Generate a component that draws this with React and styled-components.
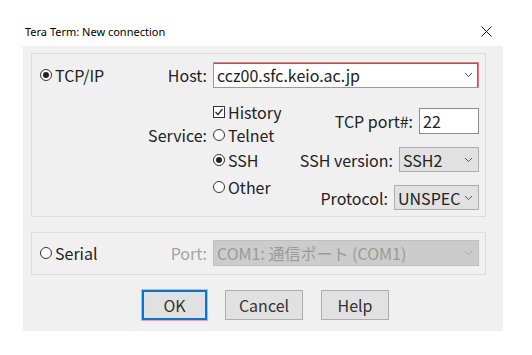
import React from "react";
import styled, { createGlobalStyle } from "styled-components";

const GlobalStyle = createGlobalStyle`
  html, body { margin: 0; padding: 0; background: #ffffff; }
  body { font-family: "Noto Sans CJK JP", "Noto Sans", sans-serif; }
  * { box-sizing: border-box; }
`;

const Page = styled.div`
  width: 532px;
  height: 355px;
  background: #fff;
  color: #222;
`;

const TitleBar = styled.div`
  height: 46px;
  padding: 16px 40px 0 25px;
  display: flex;
  align-items: center;
  justify-content: space-between;
`;

const Title = styled.span`
  font-family: "Noto Sans", "Liberation Sans", sans-serif;
  font-size: 11px;
  color: #000;
`;

const CloseIcon = styled.svg`
  width: 11px;
  height: 11px;
  display: block;
`;

const Dialog = styled.div`
  margin-left: 23px;
  width: 480px;
  height: 285px;
  background: #f0f0f0;
  padding: 7px 17px 0 8px;
  display: flex;
  flex-direction: column;
`;

const Group = styled.div`
  border: 1px solid #dcdcdc;
  display: grid;
  grid-template-columns: 1fr auto 266px;
  column-gap: 6px;
  padding-left: 8px;
  padding-right: 6px;
  height: ${(p) => p.$h}px;
  padding-top: ${(p) => p.$pt}px;
  margin-top: ${(p) => p.$mt || 0}px;
  align-content: start;
  align-items: ${(p) => p.$align || "start"};
`;

const HostGroup = styled(Group)`
  row-gap: 14px;
`;

const Text = styled.span`
  font-size: 16px;
  line-height: 20px;
  white-space: nowrap;
  color: ${(p) => (p.$muted ? "#a3a3a3" : "#222")};
`;

const FieldLabel = styled(Text)`
  justify-self: end;
  margin-top: ${(p) => p.$mt || 0}px;
`;

const Option = styled.label`
  display: flex;
  align-items: center;
  gap: 3px;
  height: 20px;
  line-height: 20px;
  margin-top: ${(p) => p.$mt || 0}px;
  font-size: 16px;
  white-space: nowrap;
  color: #222;
`;

const RadioCircle = styled.span`
  width: 12px;
  height: 12px;
  border: 1px solid #333;
  border-radius: 50%;
  display: inline-flex;
  align-items: center;
  justify-content: center;
  flex-shrink: 0;
  background: #fff;
  &::after {
    content: "";
    width: 6px;
    height: 6px;
    border-radius: 50%;
    background: #222;
    display: ${(p) => (p.$checked ? "block" : "none")};
  }
`;

const CheckBox = styled.span`
  width: 12px;
  height: 12px;
  border: 1px solid #333;
  background: #fff;
  display: inline-flex;
  align-items: center;
  justify-content: center;
  flex-shrink: 0;
`;

const Field = styled.div`
  display: flex;
  align-items: center;
  width: ${(p) => p.$w}px;
  height: ${(p) => p.$h || 25}px;
  padding-left: 3px;
  font-size: 16px;
  white-space: nowrap;
  overflow: hidden;
`;

const HostCombo = styled(Field)`
  background: #fff;
  border: 1px solid #e07a85;
  box-shadow: inset 0 1px 0 #5a66d6, inset -1px 0 0 #5a66d6;
  color: #222;
`;

const TextBox = styled(Field)`
  background: #fff;
  border: 1px solid #8c8c8c;
  color: #222;
`;

const Select = styled(Field)`
  background: ${(p) => (p.$disabled ? "#cccccc" : "#e1e1e1")};
  border: 1px solid ${(p) => (p.$disabled ? "#bfbfbf" : "#adadad")};
  color: ${(p) => (p.$disabled ? "#9a9a9a" : "#222")};
`;

const FieldValue = styled.span`
  flex: 1;
  line-height: 22px;
`;

const Chevron = styled.svg`
  width: 9px;
  height: 6px;
  margin-right: 5px;
  flex-shrink: 0;
`;

const Options = styled.div`
  display: flex;
  justify-content: space-between;
`;

const OptionList = styled.div`
  display: flex;
  flex-direction: column;
`;

const Settings = styled.div`
  display: flex;
  flex-direction: column;
  align-items: flex-end;
  gap: 13px;
  padding-top: 6px;
`;

const SettingRow = styled.div`
  display: flex;
  align-items: center;
  gap: 6px;
`;

const ButtonRow = styled.div`
  display: flex;
  gap: 18px;
  margin-top: 15px;
  padding-left: 111px;
`;

const Button = styled.button`
  width: ${(p) => p.$w}px;
  height: 30px;
  background: #e1e1e1;
  border: ${(p) => (p.$default ? "2px solid #0078d7" : "1px solid #adadad")};
  box-shadow: ${(p) => (p.$default ? "0 0 0 1px #f2a2a2" : "none")};
  font-family: "Noto Sans CJK JP", "Noto Sans", sans-serif;
  font-size: 16px;
  color: #333;
  padding: 0;
`;

const Radio = ({ checked, children, mt }) => (
  <Option $mt={mt}>
    <RadioCircle $checked={checked} />
    {children}
  </Option>
);

const ChevronIcon = ({ color = "#555" }) => (
  <Chevron viewBox="0 0 9 6">
    <polyline points="1,1 4.5,4.5 8,1" fill="none" stroke={color} strokeWidth="1" />
  </Chevron>
);

export default function App() {
  return (
    <Page>
      <GlobalStyle />
      <TitleBar>
        <Title>Tera Term: New connection</Title>
        <CloseIcon viewBox="0 0 11 11">
          <path d="M0.5 0.5 L10.5 10.5 M10.5 0.5 L0.5 10.5" stroke="#111" strokeWidth="1" />
        </CloseIcon>
      </TitleBar>
      <Dialog>
        <HostGroup $h={164} $pt={8}>
          <Radio checked mt={3}>TCP/IP</Radio>
          <FieldLabel $mt={3}>Host:</FieldLabel>
          <HostCombo $w={266} $h={26}>
            <FieldValue>ccz00.sfc.keio.ac.jp</FieldValue>
            <ChevronIcon />
          </HostCombo>

          <span />
          <FieldLabel $mt={23}>Service:</FieldLabel>
          <Options>
            <OptionList>
              <Option>
                <CheckBox>
                  <svg width="10" height="10" viewBox="0 0 10 10">
                    <polyline points="1.5,5 4,7.5 8.5,2" fill="none" stroke="#222" strokeWidth="1.2" />
                  </svg>
                </CheckBox>
                History
              </Option>
              <Radio mt={3}>Telnet</Radio>
              <Radio checked mt={5}>SSH</Radio>
              <Radio mt={7}>Other</Radio>
            </OptionList>
            <Settings>
              <SettingRow>
                <Text>TCP port#:</Text>
                <TextBox $w={60} $h={26}>
                  <FieldValue>22</FieldValue>
                </TextBox>
              </SettingRow>
              <SettingRow>
                <Text>SSH version:</Text>
                <Select $w={80}>
                  <FieldValue>SSH2</FieldValue>
                  <ChevronIcon />
                </Select>
              </SettingRow>
              <SettingRow>
                <Text>Protocol:</Text>
                <Select $w={85}>
                  <FieldValue>UNSPEC</FieldValue>
                  <ChevronIcon />
                </Select>
              </SettingRow>
            </Settings>
          </Options>
        </HostGroup>

        <Group $h={43} $pt={7} $mt={15} $align="center">
          <Radio>Serial</Radio>
          <FieldLabel $muted>Port:</FieldLabel>
          <Select $w={266} $h={26} $disabled>
            <FieldValue>COM1: 通信ポート (COM1)</FieldValue>
            <ChevronIcon color="#aaa" />
          </Select>
        </Group>

        <ButtonRow>
          <Button $w={65} $default>OK</Button>
          <Button $w={78}>Cancel</Button>
          <Button $w={68}>Help</Button>
        </ButtonRow>
      </Dialog>
    </Page>
  );
}
